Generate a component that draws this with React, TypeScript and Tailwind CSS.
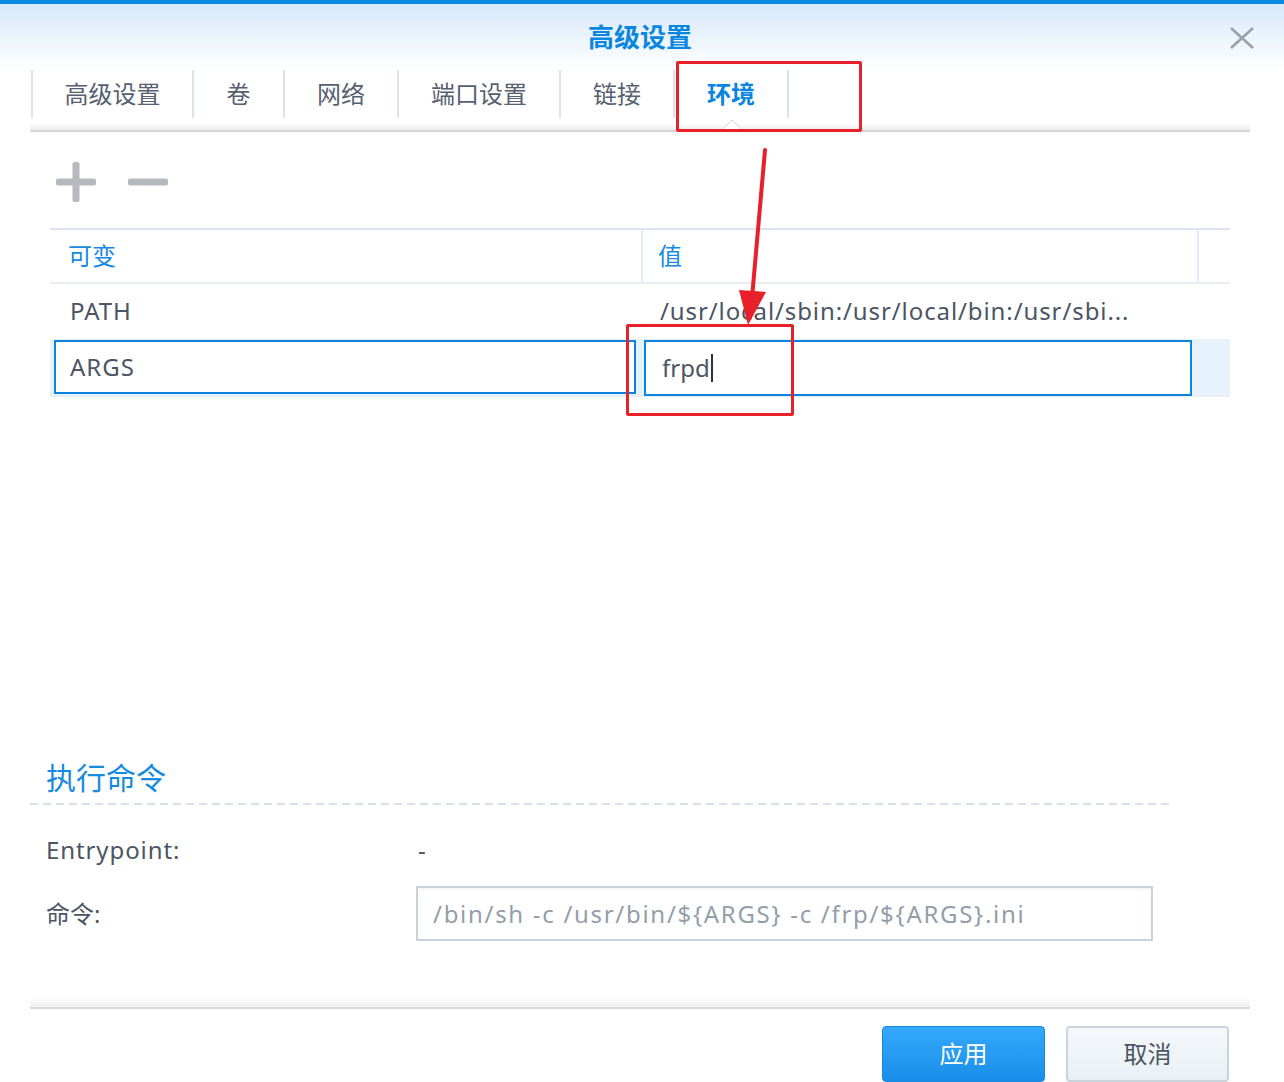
import React from "react";

const tabs: { label: string; w: string; active?: boolean }[] = [
  { label: "高级设置", w: "w-[161px]" },
  { label: "卷", w: "w-[91px]" },
  { label: "网络", w: "w-[114px]" },
  { label: "端口设置", w: "w-[162px]" },
  { label: "链接", w: "w-[114px]" },
  { label: "环境", w: "w-[114px]", active: true },
];

export default function App() {
  return (
    <div className="relative w-[1284px] h-[1082px] overflow-hidden bg-white font-['Noto_Sans','Noto_Sans_CJK_SC',sans-serif] text-[#4b5563]">
      {/* top bar */}
      <div className="h-[4px] bg-[#0a87e3]" />
      {/* header */}
      <div className="relative h-[66px] bg-gradient-to-b from-[#d6e8f9] to-white flex items-center justify-center">
        <span className="text-[26px] font-bold text-[#0a86e0] leading-none -ml-[4px]">高级设置</span>
        <svg className="absolute left-[1229px] top-[22px]" width="26" height="24" viewBox="0 0 26 24">
          <path d="M2 2 L24 22 M24 2 L2 22" stroke="#9aa1a8" strokeWidth="2.6" fill="none" />
        </svg>
      </div>
      {/* tabs */}
      <div className="ml-[30px] mr-[34px]">
        <div className="flex h-[48px] pl-[1px]">
          {tabs.map((t) => (
            <div
              key={t.label}
              className={`relative ${t.w} h-full flex items-center justify-center border-l-2 border-[#dbe3ec] text-[24px] ${
                t.active ? "font-bold text-[#0a86e0]" : "text-[#566070]"
              }`}
            >
              {t.label}
              {t.active && (
                <svg className="absolute left-[44px] top-[49px]" width="26" height="14" viewBox="0 0 26 14">
                  <path d="M0 13.5 L13 1 L26 13.5" fill="white" stroke="#d4d8dc" strokeWidth="1" />
                </svg>
              )}
            </div>
          ))}
          <div className="w-[2px] h-full bg-[#dbe3ec]" />
        </div>
        <div className="h-[12px] bg-gradient-to-b from-white from-40% to-[#ededed]" />
        <div className="h-[2px] bg-[#d8d8d8]" />
      </div>
      {/* toolbar */}
      <div className="h-[96px] flex items-start gap-[32px] pl-[56px] pt-[30px]">
        <svg width="40" height="40" viewBox="0 0 40 40">
          <rect x="0" y="16.5" width="40" height="7" rx="2" fill="#b6babf" />
          <rect x="16.5" y="0" width="7" height="40" rx="2" fill="#b6babf" />
        </svg>
        <svg width="40" height="40" viewBox="0 0 40 40">
          <rect x="0" y="16.5" width="40" height="7" rx="2" fill="#b6babf" />
        </svg>
      </div>
      {/* table */}
      <div className="h-[529px]">
        <div className="ml-[50px] w-[1180px]">
          <div className="flex h-[56px] border-t-2 border-b-2 border-t-[#dce4ed] border-b-[#e8eef4] text-[24px] text-[#1789df]">
            <div className="w-[591px] flex items-center pl-[18px]">可变</div>
            <div className="w-[2px] bg-[#e3eaf2]" />
            <div className="w-[554px] flex items-center pl-[15px]">值</div>
            <div className="w-[2px] bg-[#e3eaf2]" />
            <div className="flex-1" />
          </div>
          <div className="flex h-[55px] text-[24px] text-[#4b5563] tracking-[0.9px]">
            <div className="w-[591px] flex items-center pl-[20px] pb-[2px]">PATH</div>
            <div className="w-[554px] ml-[2px] flex items-center pl-[17px] pb-[2px] whitespace-nowrap">
              /usr/local/sbin:/usr/local/bin:/usr/sbi...
            </div>
          </div>
          <div className="flex h-[58px] bg-[#e6f2fc] border-b-2 border-[#e8eef4] text-[24px] text-[#4b5563] tracking-[1px]">
            <div className="w-[591px] pl-[4px] pr-[5px] pt-[1px]">
              <div className="h-[54px] bg-white border-2 border-[#0a84de] flex items-center pl-[14px]">ARGS</div>
            </div>
            <div className="w-[554px] ml-[2px] pl-[1px] pr-[5px] pt-[1px]">
              <div className="h-[56px] bg-white border-2 border-[#0a84de] flex items-center pl-[16px] tracking-[0px]">
                frpd<span className="inline-block w-[2px] h-[28px] bg-[#333] ml-[1px]" />
              </div>
            </div>
          </div>
        </div>
      </div>
      {/* section */}
      <div className="ml-[30px] w-[1140px]">
        <div className="h-[40px] flex items-center pl-[16px] text-[30px] text-[#168ae0]">执行命令</div>
        <div className="mt-[6px] h-[2px] bg-[repeating-linear-gradient(to_right,#d5e0ea_0_8px,transparent_8px_13px)]" />
      </div>
      <div className="ml-[46px] mt-[20px] text-[24px] text-[#4b5563]">
        <div className="flex items-center h-[50px]">
          <div className="w-[372px] tracking-[0.9px]">Entrypoint:</div>
          <div>-</div>
        </div>
        <div className="flex items-center mt-[11px]">
          <div className="w-[370px]">命令:</div>
          <div className="w-[737px] h-[55px] border-2 border-[#c8d2dd] shadow-[inset_0_2px_2px_rgba(0,0,0,0.04)] flex items-center pl-[15px] text-[#939eaa] whitespace-nowrap tracking-[1.7px]">
            /bin/sh -c /usr/bin/${"{"}ARGS{"}"} -c /frp/${"{"}ARGS{"}"}.ini
          </div>
        </div>
      </div>
      {/* footer */}
      <div className="ml-[30px] mr-[34px] mt-[56px]">
        <div className="h-[10px] bg-gradient-to-b from-white to-[#f0f0f0]" />
        <div className="h-[2px] bg-[#dadada]" />
      </div>
      <div className="flex justify-end gap-[21px] mr-[55px] mt-[17px]">
        <button className="w-[163px] h-[56px] rounded-[4px] bg-gradient-to-b from-[#34a9fb] to-[#1a8de9] border border-[#1787e0] text-white text-[24px]">
          应用
        </button>
        <button className="w-[163px] h-[56px] rounded-[4px] bg-gradient-to-b from-[#f5f8fb] to-[#eaf0f6] border-2 border-[#cbd3dc] text-[#4b5563] text-[24px]">
          取消
        </button>
      </div>

      {/* annotations */}
      <div className="absolute left-[676px] top-[61px] w-[186px] h-[71px] border-[3px] border-[#e8202a] rounded-[2px]" />
      <div className="absolute left-[626px] top-[324px] w-[168px] h-[92px] border-[3px] border-[#e8202a] rounded-[2px]" />
      <svg className="absolute left-0 top-0 pointer-events-none" width="1284" height="1082">
        <line x1="765" y1="150" x2="752" y2="298" stroke="#e8202a" strokeWidth="4" strokeLinecap="round" />
        <path d="M739 290 L766 292 L748 325 Z" fill="#e8202a" />
      </svg>
    </div>
  );
}
